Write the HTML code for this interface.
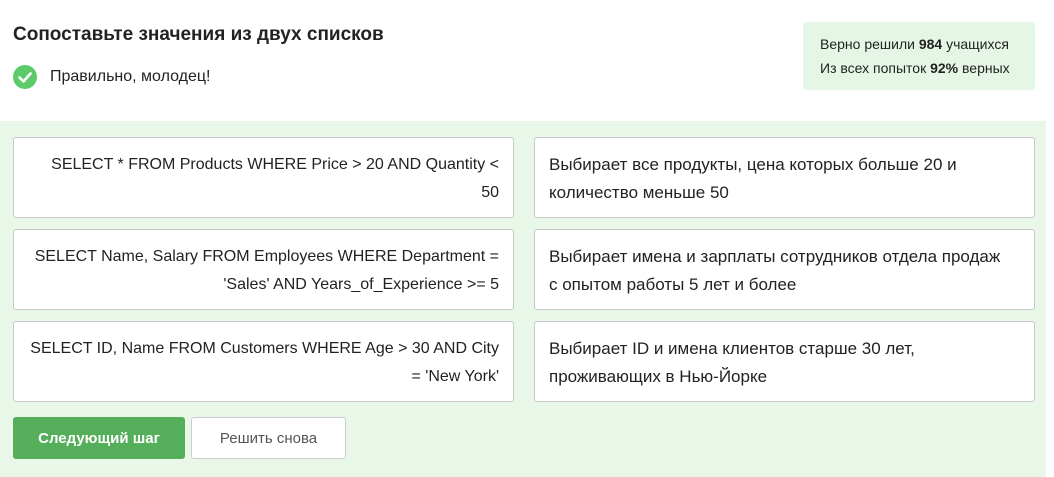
<!DOCTYPE html>
<html><head><meta charset="utf-8"><style>
body{margin:0;width:1054px;height:477px;background:#fff;font-family:"Liberation Sans",sans-serif;color:#222;position:relative;overflow:hidden}
.t{position:absolute;left:13px;top:24px;font-size:19px;font-weight:bold;color:#222}
.ok{position:absolute;left:13px;top:65px;font-size:16px;display:flex;align-items:center}
.ok svg{margin-right:13px}
.stat{position:absolute;left:803px;top:22px;width:232px;height:68px;background:#e6f6e6;border-radius:4px;font-size:14px;box-sizing:border-box;padding:10px 0 0 17px;line-height:24px;white-space:nowrap}
.g{position:absolute;left:0;top:121px;width:1046px;height:356px;background:#e8f7e8}
.b{position:absolute;background:#fff;border:1px solid #c8c8c8;border-radius:3px;box-sizing:border-box;width:501px;height:81px;font-size:16px;line-height:28px;padding:13px 14px 0 14px;white-space:nowrap}
.l{left:13px;text-align:right}.r{left:534px;width:501px;font-size:17px}
.btn{position:absolute;top:417px;height:42px;border-radius:3px;box-sizing:border-box;font-size:15px;display:flex;align-items:center;justify-content:center}
</style></head><body>
<div class="t">Сопоставьте значения из двух списков</div>
<div class="ok"><svg width="24" height="24" viewBox="0 0 24 24"><circle cx="12" cy="12" r="12" fill="#5ecb6b"/><path d="M6.5 12.5l4 4 7-8" stroke="#fff" stroke-width="2.6" fill="none" stroke-linecap="round" stroke-linejoin="round"/></svg>Правильно, молодец!</div>
<div class="stat">Верно решили <b>984</b> учащихся<br>Из всех попыток <b>92%</b> верных</div>
<div class="g"></div>
<div class="b l" style="top:137px">SELECT * FROM Products WHERE Price &gt; 20 AND Quantity &lt;<br>50</div>
<div class="b r" style="top:137px">Выбирает все продукты, цена которых больше 20 и<br>количество меньше 50</div>
<div class="b l" style="top:229px">SELECT Name, Salary FROM Employees WHERE Department =<br>'Sales' AND Years_of_Experience &gt;= 5</div>
<div class="b r" style="top:229px">Выбирает имена и зарплаты сотрудников отдела продаж<br>с опытом работы 5 лет и более</div>
<div class="b l" style="top:321px">SELECT ID, Name FROM Customers WHERE Age &gt; 30 AND City<br>= 'New York'</div>
<div class="b r" style="top:321px">Выбирает ID и имена клиентов старше 30 лет,<br>проживающих в Нью-Йорке</div>
<div class="btn" style="left:13px;width:172px;background:#55ae5a;color:#fff;font-weight:bold">Следующий шаг</div>
<div class="btn" style="left:191px;width:155px;background:#fff;border:1px solid #ccc;color:#555">Решить снова</div>
</body></html>
